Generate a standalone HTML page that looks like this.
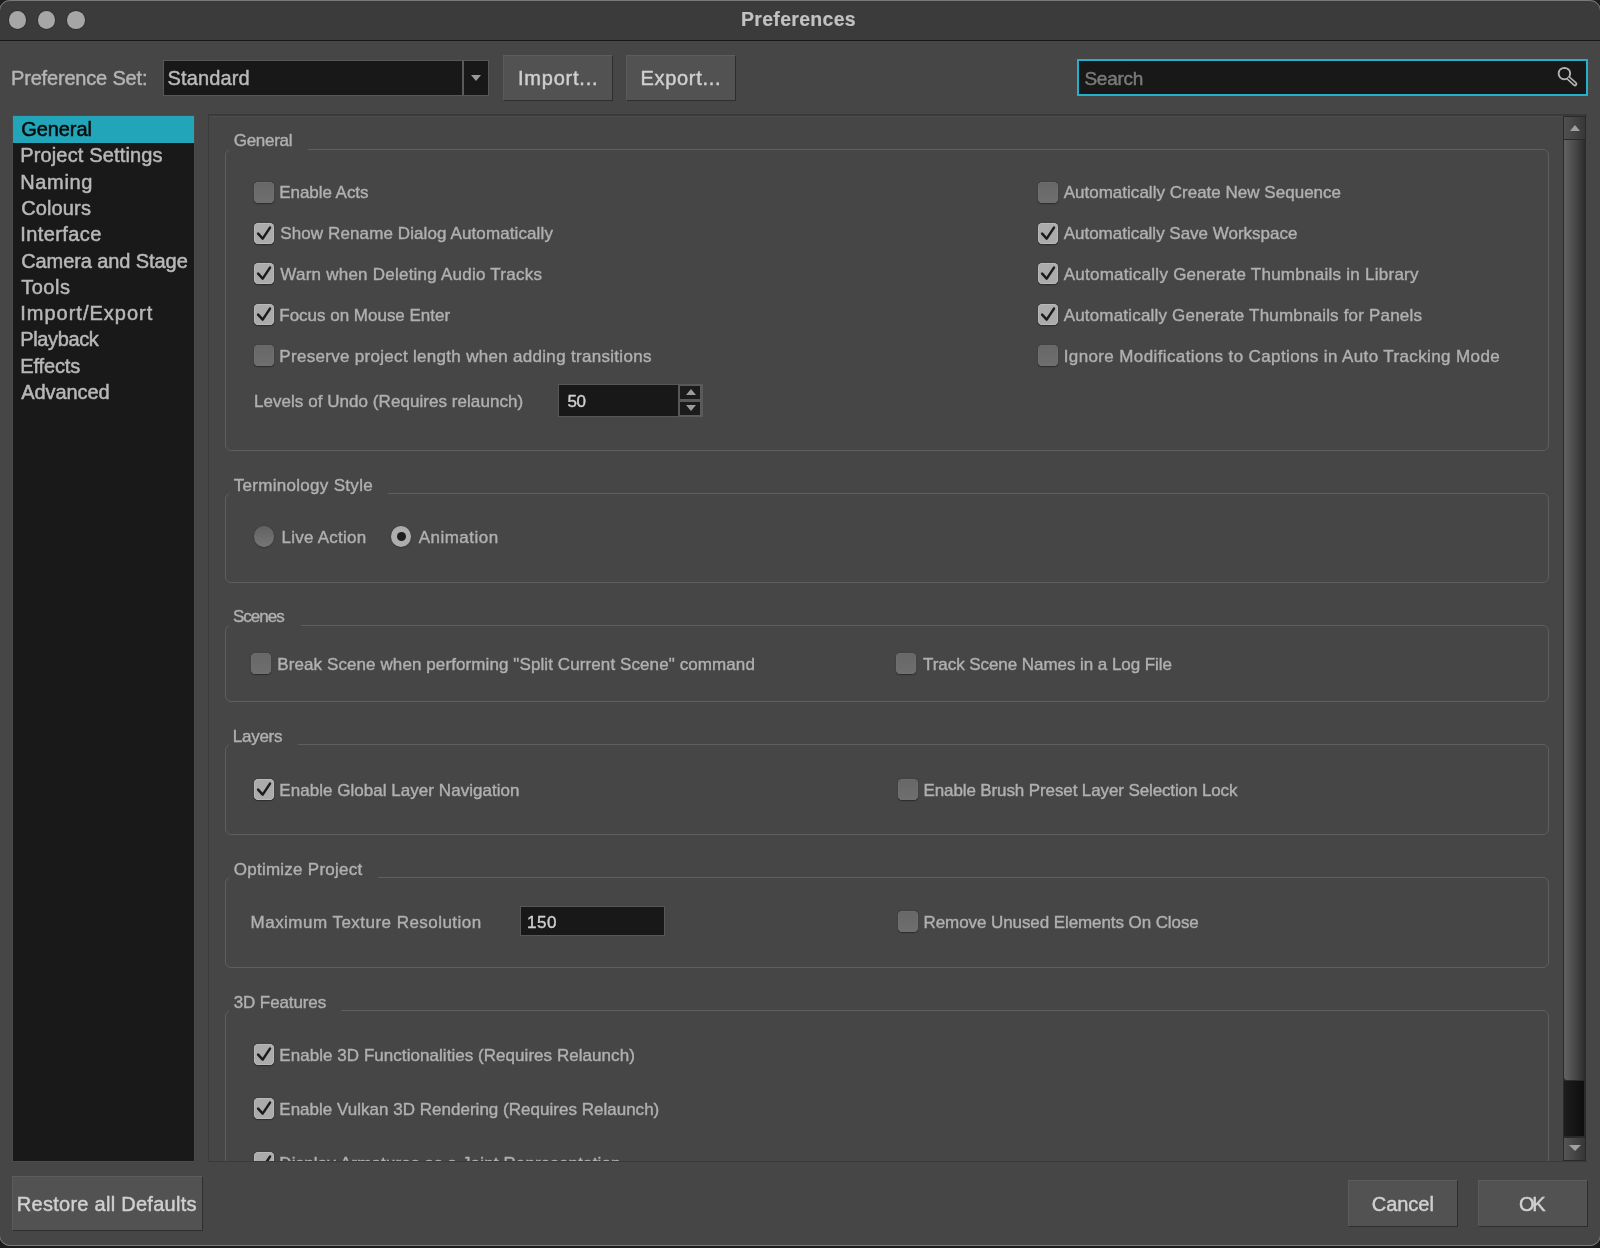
<!DOCTYPE html>
<html><head><meta charset="utf-8">
<style>
*{box-sizing:border-box}
html,body{margin:0;padding:0;width:1600px;height:1248px;overflow:hidden;background:#1c1c1c;font-family:"Liberation Sans",sans-serif}
.a{position:absolute}
#win{will-change:transform;position:absolute;left:-1px;top:0;width:1602px;height:1246px;background:#464646;border-radius:11px;overflow:hidden}
#wborder{position:absolute;left:-1px;top:0;width:1602px;height:1246px;border-radius:11px;border:1px solid #7a7a7a;pointer-events:none}
#title{position:absolute;left:0;top:0;width:1600px;height:41px;background:#3b3b3b;border-bottom:1.5px solid #161616}
.dot{position:absolute;top:11px;width:17.5px;height:17.5px;border-radius:50%;background:#a6a6a6;box-shadow:0 0 0 0.7px #2a2a2a}
.t{position:absolute;white-space:pre;color:#b6b6b6;font-size:17px;line-height:20px;-webkit-text-stroke:0.3px currentColor}
.gt{position:absolute;white-space:pre;color:#b6b6b6;font-size:17px;line-height:20px;-webkit-text-stroke:0.3px currentColor}
.cb{position:absolute;width:20px;height:21px;border-radius:4.5px;background:linear-gradient(#676767,#6f6f6f);box-shadow:0 0.5px 1.2px #2a2a2a, inset 0 0 0 0.6px #727272}
.cb.on{background:#ababab;box-shadow:0 0.5px 1.2px #2a2a2a, inset 0 0 0 1px #b9b9b9}
.cb svg{position:absolute;left:0;top:0}
.rb{position:absolute;width:20px;height:20.5px;border-radius:50%;background:linear-gradient(#626262,#767676);box-shadow:0 0.5px 1.2px #2a2a2a}
.rb.on{background:#adadad}
.rdot{position:absolute;left:5.75px;top:5.75px;width:9px;height:9px;border-radius:50%;background:#1e1e1e}
.frame{position:absolute;left:225px;width:1323.5px;border:1.3px solid #5e5e5e;border-radius:6px}
.btn{position:absolute;background:#525252;border-top:1px solid #5d5d5d;border-left:1px solid #5a5a5a;border-right:1.5px solid #2e2e2e;border-bottom:1.5px solid #2e2e2e}
.field{position:absolute;background:#181818;border:1.5px solid #575757}
</style></head><body>
<div id="win"><div class="a" style="left:1px;top:0;width:1600px;height:1248px">
  <div id="title">
    <div class="dot" style="left:8.75px"></div>
    <div class="dot" style="left:37.9px"></div>
    <div class="dot" style="left:67px"></div>
    
  </div>
  <!-- top row -->
  
  <div class="field" style="left:163px;top:60px;width:326px;height:36px"></div>
  <div class="a" style="left:462px;top:61px;width:2px;height:34px;background:#5a5a5a"></div>
  
  <div class="a" style="left:471px;top:75px;width:0;height:0;border-left:5px solid transparent;border-right:5px solid transparent;border-top:6px solid #9a9a9a"></div>
  <div class="btn" style="left:503px;top:54.5px;width:110px;height:46.5px;line-height:45px"></div>
  <div class="btn" style="left:625.5px;top:54.5px;width:110px;height:46.5px;line-height:45px"></div>
  <div class="field" style="left:1077px;top:59px;width:511px;height:37px;border:2px solid #22b0cc"></div>
  
  <svg class="a" style="left:1555px;top:64px" width="26" height="26" viewBox="0 0 26 26"><circle cx="9.4" cy="9.6" r="5.7" fill="none" stroke="#b2b2b2" stroke-width="2"/><path d="M14 14.6 L20 20" stroke="#b2b2b2" stroke-width="4.6" stroke-linecap="round"/><path d="M13.6 14.2 L19.8 19.8" stroke="#181818" stroke-width="1.4" stroke-linecap="round"/><circle cx="9.4" cy="9.6" r="4.7" fill="#181818"/></svg>

  <!-- left list -->
  <div class="a" style="left:12px;top:115px;width:183px;height:1047px;background:#4b4b4b"></div>
  <div class="a" style="left:13px;top:116px;width:181px;height:1045px;background:#191919;overflow:hidden">
    <div class="a" style="left:0;top:0;width:181px;height:26.5px;background:#22a4b9"></div>
    <div class="a" style="left:-13px;top:-116px;width:1600px;height:1248px">
<div class="t" style="left:21.20px;top:117px;font-size:20px;line-height:25px;letter-spacing:-0.067px;color:#0b0b0b;-webkit-text-stroke:0.5px #0b0b0b;">General</div>
<div class="t" style="left:20.20px;top:143px;font-size:20px;line-height:25px;letter-spacing:0.153px;color:#b8b8b8;-webkit-text-stroke:0.5px #b8b8b8;">Project Settings</div>
<div class="t" style="left:20.20px;top:170px;font-size:20px;line-height:25px;letter-spacing:0.660px;color:#b8b8b8;-webkit-text-stroke:0.5px #b8b8b8;">Naming</div>
<div class="t" style="left:21.20px;top:196px;font-size:20px;line-height:25px;letter-spacing:0.133px;color:#b8b8b8;-webkit-text-stroke:0.5px #b8b8b8;">Colours</div>
<div class="t" style="left:20.20px;top:222px;font-size:20px;line-height:25px;letter-spacing:0.412px;color:#b8b8b8;-webkit-text-stroke:0.5px #b8b8b8;">Interface</div>
<div class="t" style="left:21.20px;top:249px;font-size:20px;line-height:25px;letter-spacing:-0.087px;color:#b8b8b8;-webkit-text-stroke:0.5px #b8b8b8;">Camera and Stage</div>
<div class="t" style="left:21.20px;top:275px;font-size:20px;line-height:25px;letter-spacing:0.500px;color:#b8b8b8;-webkit-text-stroke:0.5px #b8b8b8;">Tools</div>
<div class="t" style="left:20.20px;top:301px;font-size:20px;line-height:25px;letter-spacing:1.008px;color:#b8b8b8;-webkit-text-stroke:0.5px #b8b8b8;">Import/Export</div>
<div class="t" style="left:20.20px;top:327px;font-size:20px;line-height:25px;letter-spacing:-0.357px;color:#b8b8b8;-webkit-text-stroke:0.5px #b8b8b8;">Playback</div>
<div class="t" style="left:20.20px;top:354px;font-size:20px;line-height:25px;letter-spacing:-0.117px;color:#b8b8b8;-webkit-text-stroke:0.5px #b8b8b8;">Effects</div>
<div class="t" style="left:21.20px;top:380px;font-size:20px;line-height:25px;letter-spacing:-0.071px;color:#b8b8b8;-webkit-text-stroke:0.5px #b8b8b8;">Advanced</div>
    </div>
  </div>

  <!-- content panel -->
  <div class="a" style="left:208.25px;top:114px;width:1379px;height:1048px;border-top:2px solid #3a3a3a;border-left:1.5px solid #3b3b3b;border-bottom:1px solid #3a3a3a"></div>
  <div class="a" style="left:210px;top:116px;width:1353px;height:1px;background:#4e4e4e"></div>
  <div class="a" style="left:210px;top:115.5px;width:1353px;height:1045.5px;overflow:hidden">
    <div class="a" style="left:-210px;top:-115.5px;width:1600px;height:1248px">
<div class="frame" style="top:149px;height:302px"></div>
<div class="a" style="left:229px;top:147px;width:79px;height:5px;background:#464646"></div>
<div class="cb" style="left:254px;top:181.6px"></div>
<div class="cb on" style="left:254px;top:222.5px"><svg width="20" height="21" viewBox="0 0 20 21"><path d="M4.1 10.6 L8.7 15.6 L16 4.6" fill="none" stroke="#1c1c1c" stroke-width="2.5" stroke-linecap="round" stroke-linejoin="round"/></svg></div>
<div class="cb on" style="left:254px;top:263.4px"><svg width="20" height="21" viewBox="0 0 20 21"><path d="M4.1 10.6 L8.7 15.6 L16 4.6" fill="none" stroke="#1c1c1c" stroke-width="2.5" stroke-linecap="round" stroke-linejoin="round"/></svg></div>
<div class="cb on" style="left:254px;top:304.3px"><svg width="20" height="21" viewBox="0 0 20 21"><path d="M4.1 10.6 L8.7 15.6 L16 4.6" fill="none" stroke="#1c1c1c" stroke-width="2.5" stroke-linecap="round" stroke-linejoin="round"/></svg></div>
<div class="cb" style="left:254px;top:345.2px"></div>
<div class="cb" style="left:1037.6px;top:181.6px"></div>
<div class="cb on" style="left:1037.6px;top:222.5px"><svg width="20" height="21" viewBox="0 0 20 21"><path d="M4.1 10.6 L8.7 15.6 L16 4.6" fill="none" stroke="#1c1c1c" stroke-width="2.5" stroke-linecap="round" stroke-linejoin="round"/></svg></div>
<div class="cb on" style="left:1037.6px;top:263.4px"><svg width="20" height="21" viewBox="0 0 20 21"><path d="M4.1 10.6 L8.7 15.6 L16 4.6" fill="none" stroke="#1c1c1c" stroke-width="2.5" stroke-linecap="round" stroke-linejoin="round"/></svg></div>
<div class="cb on" style="left:1037.6px;top:304.3px"><svg width="20" height="21" viewBox="0 0 20 21"><path d="M4.1 10.6 L8.7 15.6 L16 4.6" fill="none" stroke="#1c1c1c" stroke-width="2.5" stroke-linecap="round" stroke-linejoin="round"/></svg></div>
<div class="cb" style="left:1037.6px;top:345.2px"></div>
<div class="field" style="left:558px;top:383.5px;width:121px;height:33.5px"></div>
<div class="a" style="left:678.5px;top:383.5px;width:24px;height:33.5px;background:#5a5a5a"></div>
<div class="a" style="left:680px;top:385.5px;width:20px;height:13.5px;background:#1b1b1b"></div>
<div class="a" style="left:680px;top:401.5px;width:20px;height:13.5px;background:#1b1b1b"></div>
<div class="a" style="left:685.5px;top:389px;width:0;height:0;border-left:5px solid transparent;border-right:5px solid transparent;border-bottom:6px solid #9c9c9c"></div>
<div class="a" style="left:685.5px;top:405px;width:0;height:0;border-left:5px solid transparent;border-right:5px solid transparent;border-top:6px solid #9c9c9c"></div>
<div class="frame" style="top:493px;height:90px"></div>
<div class="a" style="left:229px;top:491px;width:159px;height:5px;background:#464646"></div>
<div class="rb" style="left:253.9px;top:526px"></div>
<div class="rb on" style="left:390.8px;top:526px"><div class="rdot"></div></div>
<div class="frame" style="top:625px;height:77px"></div>
<div class="a" style="left:229px;top:623px;width:71.5px;height:5px;background:#464646"></div>
<div class="cb" style="left:251px;top:653px"></div>
<div class="cb" style="left:896.3px;top:653px"></div>
<div class="frame" style="top:743.8px;height:91.20000000000005px"></div>
<div class="a" style="left:229px;top:741.8px;width:69px;height:5px;background:#464646"></div>
<div class="cb on" style="left:254px;top:778.7px"><svg width="20" height="21" viewBox="0 0 20 21"><path d="M4.1 10.6 L8.7 15.6 L16 4.6" fill="none" stroke="#1c1c1c" stroke-width="2.5" stroke-linecap="round" stroke-linejoin="round"/></svg></div>
<div class="cb" style="left:897.5px;top:778.7px"></div>
<div class="frame" style="top:877px;height:91px"></div>
<div class="a" style="left:229px;top:875px;width:149px;height:5px;background:#464646"></div>
<div class="field" style="left:520px;top:906px;width:145px;height:30px"></div>
<div class="cb" style="left:897.5px;top:911px"></div>
<div class="frame" style="top:1010.3px;height:289.70000000000005px"></div>
<div class="a" style="left:229px;top:1008.3px;width:112px;height:5px;background:#464646"></div>
<div class="cb on" style="left:254px;top:1044px"><svg width="20" height="21" viewBox="0 0 20 21"><path d="M4.1 10.6 L8.7 15.6 L16 4.6" fill="none" stroke="#1c1c1c" stroke-width="2.5" stroke-linecap="round" stroke-linejoin="round"/></svg></div>
<div class="cb on" style="left:254px;top:1098px"><svg width="20" height="21" viewBox="0 0 20 21"><path d="M4.1 10.6 L8.7 15.6 L16 4.6" fill="none" stroke="#1c1c1c" stroke-width="2.5" stroke-linecap="round" stroke-linejoin="round"/></svg></div>
<div class="cb on" style="left:254px;top:1152px"><svg width="20" height="21" viewBox="0 0 20 21"><path d="M4.1 10.6 L8.7 15.6 L16 4.6" fill="none" stroke="#1c1c1c" stroke-width="2.5" stroke-linecap="round" stroke-linejoin="round"/></svg></div>
<div class="t" style="left:233.75px;top:130px;font-size:17px;line-height:22px;letter-spacing:-0.292px;color:#b0b0b0;-webkit-text-stroke:0.4px #b0b0b0;">General</div>
<div class="t" style="left:279.30px;top:182px;font-size:17px;line-height:22px;letter-spacing:-0.060px;color:#b0b0b0;-webkit-text-stroke:0.4px #b0b0b0;">Enable Acts</div>
<div class="t" style="left:280.30px;top:223px;font-size:17px;line-height:22px;letter-spacing:0.106px;color:#b0b0b0;-webkit-text-stroke:0.4px #b0b0b0;">Show Rename Dialog Automatically</div>
<div class="t" style="left:280.30px;top:264px;font-size:17px;line-height:22px;letter-spacing:0.237px;color:#b0b0b0;-webkit-text-stroke:0.4px #b0b0b0;">Warn when Deleting Audio Tracks</div>
<div class="t" style="left:279.30px;top:305px;font-size:17px;line-height:22px;letter-spacing:-0.011px;color:#b0b0b0;-webkit-text-stroke:0.4px #b0b0b0;">Focus on Mouse Enter</div>
<div class="t" style="left:279.30px;top:346px;font-size:17px;line-height:22px;letter-spacing:0.304px;color:#b0b0b0;-webkit-text-stroke:0.4px #b0b0b0;">Preserve project length when adding transitions</div>
<div class="t" style="left:1063.65px;top:182px;font-size:17px;line-height:22px;letter-spacing:0.017px;color:#b0b0b0;-webkit-text-stroke:0.4px #b0b0b0;">Automatically Create New Sequence</div>
<div class="t" style="left:1063.65px;top:223px;font-size:17px;line-height:22px;letter-spacing:-0.009px;color:#b0b0b0;-webkit-text-stroke:0.4px #b0b0b0;">Automatically Save Workspace</div>
<div class="t" style="left:1063.65px;top:264px;font-size:17px;line-height:22px;letter-spacing:0.262px;color:#b0b0b0;-webkit-text-stroke:0.4px #b0b0b0;">Automatically Generate Thumbnails in Library</div>
<div class="t" style="left:1063.65px;top:305px;font-size:17px;line-height:22px;letter-spacing:0.187px;color:#b0b0b0;-webkit-text-stroke:0.4px #b0b0b0;">Automatically Generate Thumbnails for Panels</div>
<div class="t" style="left:1063.70px;top:346px;font-size:17px;line-height:22px;letter-spacing:0.381px;color:#b0b0b0;-webkit-text-stroke:0.4px #b0b0b0;">Ignore Modifications to Captions in Auto Tracking Mode</div>
<div class="t" style="left:253.90px;top:391px;font-size:17px;line-height:22px;letter-spacing:0.055px;color:#b0b0b0;-webkit-text-stroke:0.4px #b0b0b0;">Levels of Undo (Requires relaunch)</div>
<div class="t" style="left:567.40px;top:391px;font-size:17px;line-height:22px;letter-spacing:-0.300px;color:#cfcfcf;-webkit-text-stroke:0.4px #cfcfcf;">50</div>
<div class="t" style="left:233.75px;top:475px;font-size:17px;line-height:22px;letter-spacing:0.297px;color:#b0b0b0;-webkit-text-stroke:0.4px #b0b0b0;">Terminology Style</div>
<div class="t" style="left:281.60px;top:527px;font-size:17px;line-height:22px;letter-spacing:0.240px;color:#b0b0b0;-webkit-text-stroke:0.4px #b0b0b0;">Live Action</div>
<div class="t" style="left:418.75px;top:527px;font-size:17px;line-height:22px;letter-spacing:0.469px;color:#b0b0b0;-webkit-text-stroke:0.4px #b0b0b0;">Animation</div>
<div class="t" style="left:233.00px;top:606px;font-size:17px;line-height:22px;letter-spacing:-1.000px;color:#b0b0b0;-webkit-text-stroke:0.4px #b0b0b0;">Scenes</div>
<div class="t" style="left:277.25px;top:654px;font-size:17px;line-height:22px;letter-spacing:0.096px;color:#b0b0b0;-webkit-text-stroke:0.4px #b0b0b0;">Break Scene when performing "Split Current Scene" command</div>
<div class="t" style="left:923.00px;top:654px;font-size:17px;line-height:22px;letter-spacing:-0.058px;color:#b0b0b0;-webkit-text-stroke:0.4px #b0b0b0;">Track Scene Names in a Log File</div>
<div class="t" style="left:232.75px;top:726px;font-size:17px;line-height:22px;letter-spacing:-0.250px;color:#b0b0b0;-webkit-text-stroke:0.4px #b0b0b0;">Layers</div>
<div class="t" style="left:279.30px;top:780px;font-size:17px;line-height:22px;letter-spacing:0.038px;color:#b0b0b0;-webkit-text-stroke:0.4px #b0b0b0;">Enable Global Layer Navigation</div>
<div class="t" style="left:923.50px;top:780px;font-size:17px;line-height:22px;letter-spacing:-0.115px;color:#b0b0b0;-webkit-text-stroke:0.4px #b0b0b0;">Enable Brush Preset Layer Selection Lock</div>
<div class="t" style="left:233.75px;top:859px;font-size:17px;line-height:22px;letter-spacing:0.250px;color:#b0b0b0;-webkit-text-stroke:0.4px #b0b0b0;">Optimize Project</div>
<div class="t" style="left:250.60px;top:912px;font-size:17px;line-height:22px;letter-spacing:0.468px;color:#b0b0b0;-webkit-text-stroke:0.4px #b0b0b0;">Maximum Texture Resolution</div>
<div class="t" style="left:527.00px;top:912px;font-size:17px;line-height:22px;letter-spacing:0.500px;color:#cfcfcf;-webkit-text-stroke:0.4px #cfcfcf;">150</div>
<div class="t" style="left:923.50px;top:912px;font-size:17px;line-height:22px;letter-spacing:-0.083px;color:#b0b0b0;-webkit-text-stroke:0.4px #b0b0b0;">Remove Unused Elements On Close</div>
<div class="t" style="left:233.75px;top:992px;font-size:17px;line-height:22px;letter-spacing:-0.115px;color:#b0b0b0;-webkit-text-stroke:0.4px #b0b0b0;">3D Features</div>
<div class="t" style="left:279.30px;top:1045px;font-size:17px;line-height:22px;letter-spacing:0.048px;color:#b0b0b0;-webkit-text-stroke:0.4px #b0b0b0;">Enable 3D Functionalities (Requires Relaunch)</div>
<div class="t" style="left:279.30px;top:1099px;font-size:17px;line-height:22px;letter-spacing:0.016px;color:#b0b0b0;-webkit-text-stroke:0.4px #b0b0b0;">Enable Vulkan 3D Rendering (Requires Relaunch)</div>
<div class="t" style="left:279.30px;top:1153px;font-size:17px;line-height:22px;letter-spacing:0.136px;color:#b0b0b0;-webkit-text-stroke:0.4px #b0b0b0;">Display Armatures as a Joint Representation</div>
    </div>
  </div>
  <!-- scrollbar -->
  <div class="a" style="left:1563px;top:116px;width:23px;height:1045px;background:#2a2a2a"></div>
  <div class="a" style="left:1564px;top:117px;width:21px;height:22px;background:linear-gradient(90deg,#505050,#383838)"></div>
  <div class="a" style="left:1569.5px;top:124.5px;width:0;height:0;border-left:5.75px solid transparent;border-right:5.75px solid transparent;border-bottom:6px solid #a0a0a0"></div>
  <div class="a" style="left:1564px;top:140px;width:21px;height:940px;border-radius:0 0 3px 3px;background:linear-gradient(90deg,#626262,#4a4a4a 50%,#2c2c2c)"></div>
  <div class="a" style="left:1564px;top:1080.5px;width:20px;height:55px;background:linear-gradient(90deg,#1d1d1d,#0e0e0e)"></div>
  <div class="a" style="left:1564px;top:1137.5px;width:21px;height:22.5px;background:linear-gradient(90deg,#555,#363636)"></div>
  <div class="a" style="left:1569px;top:1145px;width:0;height:0;border-left:6px solid transparent;border-right:6px solid transparent;border-top:6px solid #a0a0a0"></div>

  <!-- bottom buttons -->
  <div class="btn" style="left:11.5px;top:1175.5px;width:191px;height:55px;line-height:53px"></div>
  <div class="btn" style="left:1347.5px;top:1179.75px;width:110px;height:46.75px;line-height:44px"></div>
  <div class="btn" style="left:1478px;top:1179.75px;width:109.5px;height:46.75px;line-height:44px"></div>
<div class="t" style="left:741.00px;top:7px;font-size:19.5px;line-height:25px;letter-spacing:0.300px;color:#c2c2c2;-webkit-text-stroke:0.15px #c2c2c2;font-weight:bold;">Preferences</div>
<div class="t" style="left:11.00px;top:66px;font-size:20px;line-height:25px;letter-spacing:-0.179px;color:#b4b4b4;-webkit-text-stroke:0.45px #b4b4b4;">Preference Set:</div>
<div class="t" style="left:167.50px;top:66px;font-size:20px;line-height:25px;letter-spacing:0.143px;color:#bababa;-webkit-text-stroke:0.45px #bababa;">Standard</div>
<div class="t" style="left:518.00px;top:66px;font-size:20px;line-height:25px;letter-spacing:0.781px;color:#d0d0d0;-webkit-text-stroke:0.45px #d0d0d0;">Import...</div>
<div class="t" style="left:640.50px;top:66px;font-size:20px;line-height:25px;letter-spacing:0.688px;color:#d0d0d0;-webkit-text-stroke:0.45px #d0d0d0;">Export...</div>
<div class="t" style="left:1084.50px;top:67px;font-size:19px;line-height:24px;letter-spacing:-0.300px;color:#7a7a7a;-webkit-text-stroke:0.45px #7a7a7a;">Search</div>
<div class="t" style="left:16.80px;top:1192px;font-size:20px;line-height:25px;letter-spacing:0.274px;color:#d0d0d0;-webkit-text-stroke:0.45px #d0d0d0;">Restore all Defaults</div>
<div class="t" style="left:1371.80px;top:1192px;font-size:20px;line-height:25px;letter-spacing:-0.040px;color:#d0d0d0;-webkit-text-stroke:0.45px #d0d0d0;">Cancel</div>
<div class="t" style="left:1519.00px;top:1192px;font-size:20px;line-height:25px;letter-spacing:-2.300px;color:#d0d0d0;-webkit-text-stroke:0.45px #d0d0d0;">OK</div>
</div></div>
<div id="wborder"></div>
</body></html>
